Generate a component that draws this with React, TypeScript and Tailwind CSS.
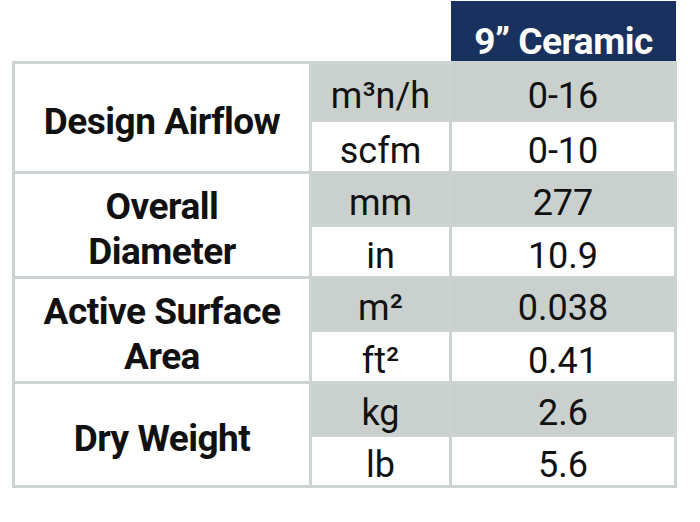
import React from "react";

const grey = "bg-[#c9d0cd]";
const white = "bg-white";

type Group = { label: string[]; rows: [string, string][] };

const groups: Group[] = [
  { label: ["Design Airflow"], rows: [["m³n/h", "0-16"], ["scfm", "0-10"]] },
  { label: ["Overall", "Diameter"], rows: [["mm", "277"], ["in", "10.9"]] },
  { label: ["Active Surface", "Area"], rows: [["m²", "0.038"], ["ft²", "0.41"]] },
  { label: ["Dry Weight"], rows: [["kg", "2.6"], ["lb", "5.6"]] },
];

const cell = "flex items-center justify-center text-[36px] leading-none pt-[8px]";

export default function App() {
  return (
    <div
      className="w-[700px] h-[522px] bg-white text-[#111] overflow-hidden"
      style={{ fontFamily: "Roboto, 'Liberation Sans', sans-serif" }}
    >
      <div className="ml-[451px] mt-[1px] w-[225px] h-[60px] bg-[#18315e] text-white font-bold text-[37px] leading-none pt-[22px] text-center tracking-[-0.5px]">
        9” Ceramic
      </div>
      <div className="ml-[12px] w-[665px] bg-[#ccd3d0] p-[3px] grid grid-cols-[294px_137px_222px] grid-rows-[55px_49px_50px_49px_50px_49px_50px_48px] gap-[3px]">
        {groups.map((g, gi) => (
          <React.Fragment key={gi}>
            <div className={`${white} row-span-2 flex flex-col items-center justify-center pt-[8px] font-bold text-[37px] leading-[45px] tracking-[-0.5px]`}>
              {g.label.map((l) => (
                <span key={l}>{l}</span>
              ))}
            </div>
            <div className={`${grey} ${cell}`}>{g.rows[0][0]}</div>
            <div className={`${grey} ${cell}`}>{g.rows[0][1]}</div>
            <div className={`${white} ${cell}`}>{g.rows[1][0]}</div>
            <div className={`${white} ${cell}`}>{g.rows[1][1]}</div>
          </React.Fragment>
        ))}
      </div>
    </div>
  );
}
